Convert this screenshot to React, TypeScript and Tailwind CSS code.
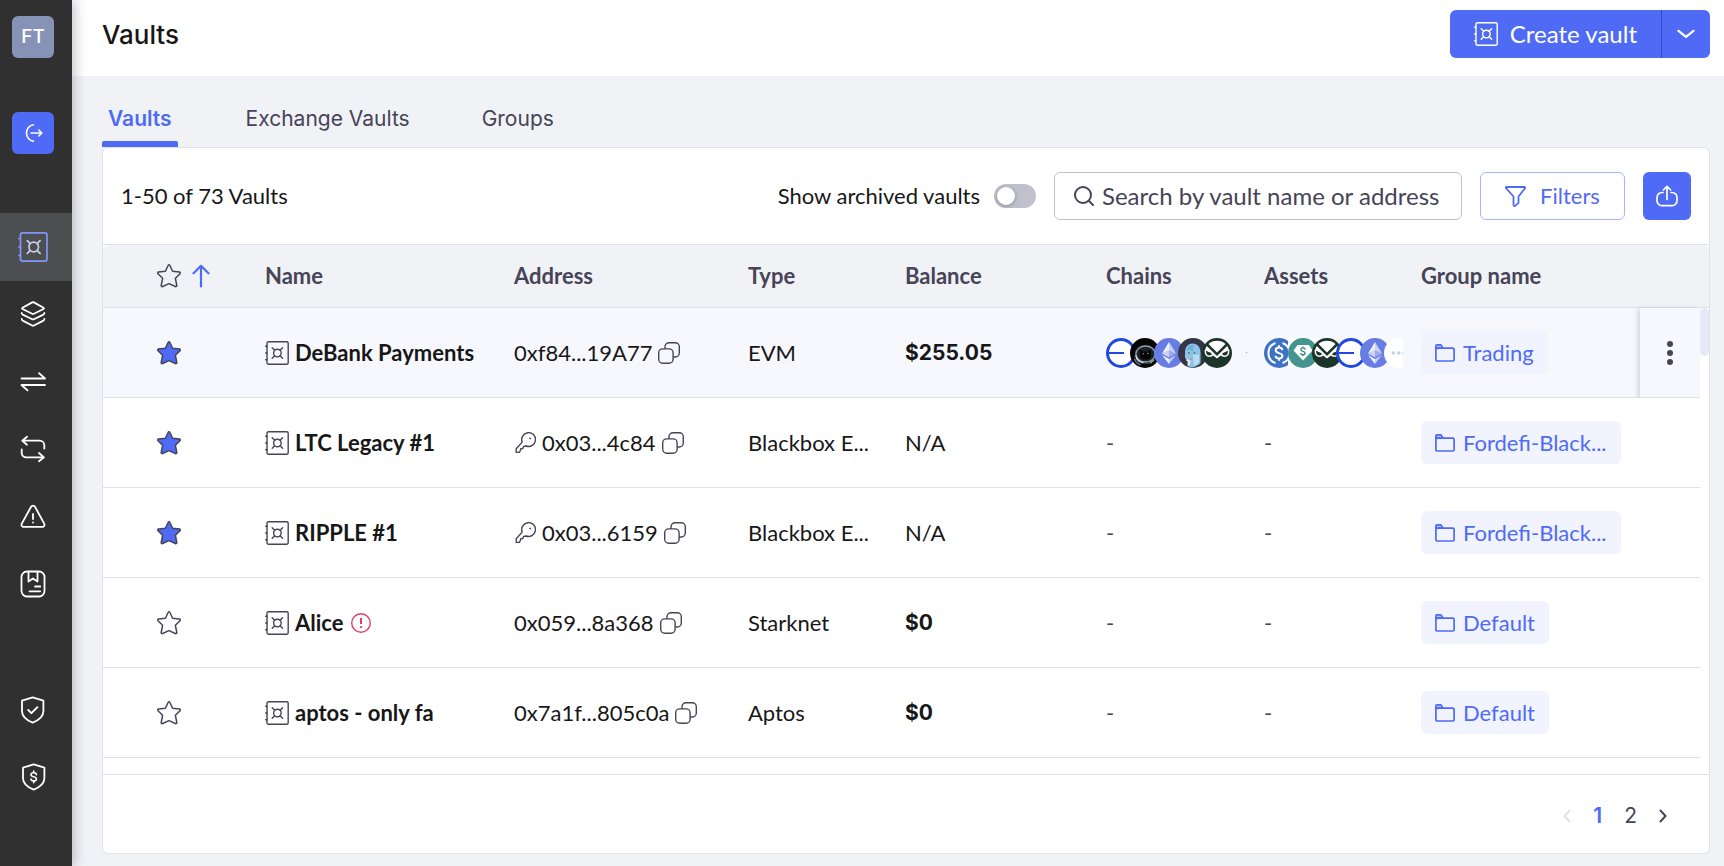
import type { ReactNode } from "react";

type IconProps = { className?: string };

function VaultIcon({ className = "size-6" }: IconProps) {
  return (
    <svg viewBox="0 0 24 24" fill="none" stroke="currentColor" strokeWidth="1.4" strokeLinecap="round" className={className} aria-hidden="true">
      <rect x="2" y="0.8" width="21.2" height="22.4" rx="1.4" />
      <path d="M0.7 5.2H2M0.7 12H2M0.7 18.8H2" />
      <circle cx="12.4" cy="12" r="3.8" />
      <path d="M9.7 9.3 7.2 6.8M15.1 9.3l2.5-2.5M9.7 14.7l-2.5 2.5M15.1 14.7l2.5 2.5" />
    </svg>
  );
}

function StarIcon({ filled = false }: { filled?: boolean }) {
  return (
    <svg viewBox="0 0 24 24" fill={filled ? "#4f6bf6" : "none"} stroke="#464457" strokeWidth="1.5" strokeLinejoin="round" className="size-6" aria-hidden="true">
      <path d="M11.2 1.3c.3-.7 1.3-.7 1.6 0l2.8 6 6.9.8c.8.1 1.1 1 .5 1.6l-4.6 4.6 1.4 7.2c.1.8-.7 1.4-1.4 1L12 19.6l-6.4 2.9c-.7.4-1.5-.2-1.4-1l1.4-7.200L1 9.700c-.6-.6-.3-1.500.5-1.600l6.900-.8z" />
    </svg>
  );
}

function ArrowUpIcon() {
  return (
    <svg viewBox="0 0 18 24" fill="none" stroke="#4f6bf6" strokeWidth="2.2" strokeLinecap="round" strokeLinejoin="round" className="h-6 w-[18px]" aria-hidden="true">
      <path d="M9 22.5V1.8M1.5 9.3 9 1.8l7.5 7.5" />
    </svg>
  );
}

function CopyIcon() {
  return (
    <svg viewBox="0 0 22 22" fill="none" stroke="#464457" strokeWidth="1.4" className="size-[22px]" aria-hidden="true">
      <rect x="0.7" y="6.9" width="14.4" height="14.4" rx="4" />
      <path d="M7 6.900V4.700a4 4 0 0 1 4-4h6.300a4 4 0 0 1 4 4V11a4 4 0 0 1-4 4h-2.200" />
    </svg>
  );
}

function KeyIcon() {
  return (
    <svg viewBox="0 0 22 22" fill="none" stroke="#464457" strokeWidth="1.4" strokeLinejoin="round" className="size-[22px]" aria-hidden="true">
      <path d="M8.200 10.100A6.900 6.900 0 1 1 12.200 14L9.600 14.400 8.800 16.600 6.800 16.800 6.200 18.800 5.300 20.400H2.200V16.800z" />
      <path d="M15.700 6h.9v.9h-.9z" fill="#464457" strokeWidth="0.8" />
    </svg>
  );
}

function FolderIcon() {
  return (
    <svg viewBox="0 0 20 18" fill="none" stroke="#4f6bf6" strokeWidth="1.7" strokeLinejoin="round" className="h-[18px] w-5" aria-hidden="true">
      <path d="M.9 4.500V1.900c0-.6.4-1 1-1H6l1.900 3z" fill="#b3c0fb" />
      <path d="M.9 4.200h16.900c.8 0 1.300.5 1.300 1.200v10.400c0 .7-.5 1.200-1.200 1.200H2.100c-.7 0-1.200-.5-1.200-1.200z" />
    </svg>
  );
}

function WarningCircleIcon() {
  return (
    <svg viewBox="0 0 20 20" fill="none" stroke="#df3f6b" className="size-5" role="img" aria-label="Needs attention">
      <circle cx="10" cy="10" r="9.3" strokeWidth="1.400" />
      <path d="M10 5v6M10 13.300v1.700" strokeWidth="2" />
    </svg>
  );
}

function FilterIcon() {
  return (
    <svg viewBox="0 0 21 21" fill="none" stroke="#4f6bf6" strokeWidth="1.8" strokeLinejoin="round" className="size-[21px]" aria-hidden="true">
      <path d="M1.600 1h17.800c.6 0 .9.700.6 1.200l-6.500 8.300v6.400l-3.300 3c-.6.500-1.700.1-1.700-.8v-8.600L1 2.200C.7 1.700 1 1 1.600 1z" />
    </svg>
  );
}

function ShareIcon() {
  return (
    <svg viewBox="0 0 22 22" fill="none" stroke="white" strokeWidth="1.7" strokeLinecap="round" strokeLinejoin="round" className="size-[22px]" aria-hidden="true">
      <path d="M11 14.500V1.400M7.400 5 11 1.400 14.600 5" />
      <path d="M7 7.500H6a5 5 0 0 0-5 5v3.200a5 5 0 0 0 5 5h10a5 5 0 0 0 5-5v-3.200a5 5 0 0 0-5-5h-1" />
    </svg>
  );
}

function SearchIcon() {
  return (
    <svg viewBox="0 0 20 20" fill="none" stroke="#464457" strokeWidth="2" strokeLinecap="round" className="size-5 shrink-0" aria-hidden="true">
      <circle cx="9" cy="9" r="8" />
      <path d="m14.800 14.800 4.200 4.200" />
    </svg>
  );
}

function NavSvg({ children }: { children: ReactNode }) {
  return (
    <svg viewBox="0 0 28 28" fill="none" stroke="white" strokeWidth="1.8" strokeLinecap="round" strokeLinejoin="round" className="size-7" aria-hidden="true">
      {children}
    </svg>
  );
}

const mainNav = [
  {
    label: "Assets",
    icon: (
      <NavSvg>
        <path d="M3.500 7.700 13.200 2.400a2 2 0 0 1 1.700 0l9.600 5.300c.5.400.5 1 0 1.300l-9.600 4.800a2 2 0 0 1-1.700 0L3.500 9c-.5-.3-.5-.900 0-1.300z" />
        <path d="M2.700 13c0 .9.500 1.300 1 1.600l9.500 4.600c.5.300 1.100.3 1.700 0l9.500-4.600c.5-.3 1-.7 1-1.600" />
        <path d="M2.700 19c0 .9.500 1.300 1 1.600l9.500 4.900c.5.300 1.100.3 1.700 0l9.500-4.900c.5-.3 1-.7 1-1.600" />
      </NavSvg>
    ),
  },
  {
    label: "Transactions",
    icon: (
      <NavSvg>
        <path d="M2.500 10.500h23.500l-6-5.300M26 17H2.500l6 5.300" />
      </NavSvg>
    ),
  },
  {
    label: "Swaps",
    icon: (
      <NavSvg>
        <path d="M8 1.700 3.300 5.700 8 9.700M3.300 5.700h17.500a4.500 4.500 0 0 1 4.500 4.500V13.500" />
        <path d="m20 18 4.900 4.400L20 26.300M24.900 22.400H7.200A4.500 4.500 0 0 1 2.700 17.900V14.500" />
      </NavSvg>
    ),
  },
  {
    label: "Alerts",
    icon: (
      <NavSvg>
        <path d="M12.100 3.700a2.300 2.300 0 0 1 3.900 0l9.200 16.900c.8 1.500-.1 3.300-1.800 3.300H4.600c-1.700 0-2.600-1.800-1.800-3.300z" />
        <path d="M14 11v5M14 19.300v.2" />
      </NavSvg>
    ),
  },
  {
    label: "Address book",
    icon: (
      <NavSvg>
        <rect x="2.500" y="1.500" width="23" height="25" rx="5.500" />
        <path d="M9.500 1.800V11.500l4.500-3 4.500 3V1.800M16 16.500h5.200M10.500 21.300h10.700" />
      </NavSvg>
    ),
  },
];

const bottomNav = [
  {
    label: "Policies",
    icon: (
      <NavSvg>
        <path d="M13.700 1.300 3 4.700v10.500c0 5.500 5.700 9.400 10.700 11.400 4.900-2 10.700-5.900 10.700-11.400V4.700z" />
        <path d="m9.200 14 3.200 3.200 6-6" strokeWidth="1.9" />
      </NavSvg>
    ),
  },
  {
    label: "Spending limits",
    icon: (
      <NavSvg>
        <path d="M14.700 1.300 4 4.700v10.500c0 5.500 5.700 9.400 10.700 11.400 4.900-2 10.700-5.900 10.700-11.400V4.700z" />
        <path d="M17.400 11.700c0-1.200-1.200-1.900-2.700-1.900s-2.700.7-2.700 2c0 2.700 5.400 1.400 5.400 4.100 0 1.300-1.200 2-2.700 2s-2.700-.7-2.700-1.900M14.700 8v1.500M14.700 18.300v1.400" strokeWidth="1.6" />
      </NavSvg>
    ),
  },
];

/* Token and network badges */

function Coin({ children, className = "" }: { children: ReactNode; className?: string }) {
  return (
    <svg viewBox="0 0 30 30" className={`size-[30px] shrink-0 ${className}`} aria-hidden="true">
      {children}
    </svg>
  );
}

const BaseCoin = () => (
  <Coin>
    <circle cx="15" cy="15" r="15" fill="#1f49de" />
    <circle cx="15" cy="15" r="12" fill="white" />
    <path d="M2 15h16" stroke="#1f49de" strokeWidth="2" />
  </Coin>
);

const AstronautCoin = () => (
  <Coin>
    <circle cx="15" cy="15" r="15" fill="#050506" />
    <path d="M5 21a12 10 0 0 1 20-10l1 9-5 6H9z" fill="#25303a" />
    <ellipse cx="15.500" cy="16" rx="9.600" ry="8" fill="#1c2429" stroke="#8fa3ab" strokeWidth="1.300" />
    <path d="m10 11.500 3 2h5l3-2.500v8l-3 2.500h-5l-3-2z" fill="#030303" />
    <path d="M12.500 15.800h1.300M17.200 15.300h1.300" stroke="#c8d2d6" strokeWidth="0.9" />
    <path d="M6 17.500c.5 4 3.500 6.500 7.500 7" stroke="#d3dee2" strokeWidth="1.500" fill="none" />
    <path d="M4.500 21c1 3 3 5 6 6" stroke="#77628c" strokeWidth="1.500" fill="none" />
    <path d="M20 25l4-3" stroke="#94a4ac" strokeWidth="1.500" />
  </Coin>
);

const EthCoin = () => (
  <Coin>
    <circle cx="15" cy="15" r="15" fill="#687de3" />
    <path d="M15 4v8.200l-7 3.200z" fill="#fff" fillOpacity="0.9" />
    <path d="M15 4l7 11.400-7-3.200z" fill="#fff" fillOpacity="0.65" />
    <path d="M15 12.200v7.300l-7-4.100z" fill="#fff" fillOpacity="0.65" />
    <path d="M15 12.200l7 3.200-7 4.100z" fill="#fff" fillOpacity="0.35" />
    <path d="M8 17l7 4.100V26z" fill="#fff" fillOpacity="0.9" />
    <path d="M22 17l-7 4.100V26z" fill="#fff" fillOpacity="0.6" />
  </Coin>
);

const GhostCoin = () => (
  <Coin>
    <circle cx="15" cy="15" r="15" fill="#343647" />
    <path d="M7 15c0-6 3-9.500 7.500-9.500 5 0 8 3.500 8 9.500v10c-2 2-5 4-8 4.500l-5-1.500V22l-2.500-2z" fill="#8cc5e6" />
    <path d="M8.500 12c1-4.500 5-6 8-4.500-2 2-2 4-1 6l-3-1z" fill="#6fb1da" />
    <path d="M15 16l6 1v8l-5 3z" fill="#b6dcf1" />
    <circle cx="11" cy="15" r="0.8" fill="#2c4358" />
    <circle cx="16.500" cy="15" r="0.8" fill="#2c4358" />
    <path d="M8.500 21.500l3 2-1 4" stroke="#f1e9f0" strokeWidth="2" fill="none" />
    <circle cx="13" cy="21" r="1.200" fill="#d78ba8" />
  </Coin>
);

const OwlCoin = () => (
  <Coin>
    <circle cx="15" cy="15" r="15" fill="#1c352b" />
    <path d="M6.500 6A12.800 12.800 0 0 1 23.500 6L15 14.500z" fill="white" />
    <path d="M4.800 8 15 18 25.200 8A12.800 12.800 0 0 1 27 12L21.500 15.500 15 20.500 8.500 15.500 3 12A12.800 12.800 0 0 1 4.800 8z" fill="white" />
    <path d="M5 13.500c0 2.200 1 3.200 2.500 3.200s2.200-.7 2-1.700zM25 13.500c0 2.200-1 3.200-2.500 3.200s-2.200-.7-2-1.700z" fill="#1c352b" />
    <path d="M3.300 12c-.3 4 1.200 6.200 4.200 6.200 1.500 0 2.700-.7 3.500-1.700M26.700 12c.3 4-1.200 6.200-4.200 6.200-1.500 0-2.700-.7-3.500-1.700" stroke="white" strokeWidth="1.400" fill="none" />
  </Coin>
);

function DollarMark({ color }: { color: string }) {
  return (
    <path
      d="M18.300 12.200c0-1.700-1.400-2.700-3.300-2.700s-3.300 1-3.300 2.700c0 3.900 6.700 1.900 6.700 5.600 0 1.800-1.500 2.800-3.400 2.800s-3.400-1-3.400-2.800M15 7.300v2M15 20.800v2"
      stroke={color}
      strokeWidth="2"
      fill="none"
    />
  );
}

const UsdcCoin = () => (
  <Coin>
    <circle cx="15" cy="15" r="15" fill="#3d73c4" />
    <path d="M11.500 5a10.600 10.600 0 0 0 0 20M18.500 5a10.600 10.600 0 0 1 0 20" stroke="white" strokeWidth="2" fill="none" />
    <DollarMark color="white" />
  </Coin>
);

const TealCoin = () => (
  <Coin className="bg-white">
    <circle cx="15" cy="15" r="15" fill="#43938e" />
    <path d="M9.500 7h11.500l3.500 5.500L15 22.500 5.500 12.500z" fill="white" />
    <g transform="translate(5.500 3.800) scale(.63)">
      <DollarMark color="#347f7a" />
    </g>
  </Coin>
);

const MoreCoin = () => (
  <Coin>
    <circle cx="15" cy="15" r="15" fill="white" />
    <path d="M15 0h15v30H15z" fill="white" />
    <circle cx="9.500" cy="15" r="1.800" fill="#c6d0e8" />
    <circle cx="14.800" cy="15" r="1.800" fill="#c6d0e8" />
    <circle cx="20" cy="15" r="1.800" fill="#c6d0e8" />
  </Coin>
);

type Vault = {
  name: string;
  starred: boolean;
  address: string;
  hasKey?: boolean;
  warning?: boolean;
  type: string;
  balance: string;
  group: string;
  active?: boolean;
};

const vaults: Vault[] = [
  { name: "DeBank Payments", starred: true, address: "0xf84...19A77", type: "EVM", balance: "$255.05", group: "Trading", active: true },
  { name: "LTC Legacy #1", starred: true, address: "0x03...4c84", hasKey: true, type: "Blackbox E...", balance: "N/A", group: "Fordefi-Black..." },
  { name: "RIPPLE #1", starred: true, address: "0x03...6159", hasKey: true, type: "Blackbox E...", balance: "N/A", group: "Fordefi-Black..." },
  { name: "Alice", starred: false, address: "0x059...8a368", warning: true, type: "Starknet", balance: "$0", group: "Default" },
  { name: "aptos - only fa", starred: false, address: "0x7a1f...805c0a", type: "Aptos", balance: "$0", group: "Default" },
];

function VaultRow({ vault }: { vault: Vault }) {
  const cell = `h-[90px] border-b border-[#dfe1e6] p-0 ${vault.active ? "bg-[#f7f8fd]" : "bg-white"}`;
  return (
    <tr>
      <td className={`${cell} pl-[54px]`}>
        <button type="button" className="block" aria-label={vault.starred ? `Unstar ${vault.name}` : `Star ${vault.name}`}>
          <StarIcon filled={vault.starred} />
        </button>
      </td>
      <td className={cell}>
        <div className="flex items-center">
          <VaultIcon className="mr-1.5 size-6 text-[#464457]" />
          <span className="font-bold whitespace-nowrap">{vault.name}</span>
          {vault.warning && <span className="ml-2"><WarningCircleIcon /></span>}
        </div>
      </td>
      <td className={cell}>
        <div className="flex items-center gap-1.5">
          {vault.hasKey && <KeyIcon />}
          <span>{vault.address}</span>
          <button type="button" aria-label={`Copy address of ${vault.name}`}>
            <CopyIcon />
          </button>
        </div>
      </td>
      <td className={`${cell} whitespace-nowrap`}>{vault.type}</td>
      <td className={cell}>
        {vault.balance === "N/A" ? vault.balance : <span className="font-[Inter,sans-serif] text-[21px] font-bold">{vault.balance}</span>}
      </td>
      <td className={cell}>
        {vault.active ? (
          <div className="flex items-center -space-x-1.5">
            <BaseCoin />
            <AstronautCoin />
            <EthCoin />
            <GhostCoin />
            <OwlCoin />
            <span className="pl-5">
              <span className="block size-px bg-[#8a93a8]" />
            </span>
          </div>
        ) : (
          <span className="text-[#464457]">-</span>
        )}
      </td>
      <td className={cell}>
        {vault.active ? (
          <div className="mr-[18px] flex items-center -space-x-1.5 overflow-hidden">
            <UsdcCoin />
            <TealCoin />
            <OwlCoin />
            <BaseCoin />
            <EthCoin />
            <MoreCoin />
          </div>
        ) : (
          <span className="text-[#464457]">-</span>
        )}
      </td>
      <td className={cell}>
        <a href="#group" className="inline-flex h-[43px] items-center gap-2 rounded-md bg-[#f1f3fe] px-3.5 align-middle whitespace-nowrap text-[#4f6bf6]">
          <FolderIcon />
          {vault.group}
        </a>
      </td>
      <td className={`${cell} ${vault.active ? "shadow-[-3px_0_5px_-1px_rgba(40,40,60,0.18)]" : ""}`}>
        {vault.active && (
          <button type="button" aria-label={`Actions for ${vault.name}`} className="flex w-full justify-center">
            <svg viewBox="0 0 6 24" fill="#464457" className="h-6 w-1.5" aria-hidden="true">
              <circle cx="3" cy="3" r="3" />
              <circle cx="3" cy="12" r="3" />
              <circle cx="3" cy="21" r="3" />
            </svg>
          </button>
        )}
      </td>
      <td className="p-0 align-top">{vault.active && <div className="h-12 w-[9px] rounded-full bg-[#e7e9f6]" />}</td>
    </tr>
  );
}

export default function App() {
  const th = "h-[63px] border-b border-[#dfe1e6] bg-[#f1f2f6] p-0 text-left font-bold text-[#464457]";
  return (
    <div className="flex min-h-screen bg-[#f1f2f6] font-[Lato,sans-serif] text-[22px] leading-7 text-[#171717]">
      <aside className="z-10 flex w-18 shrink-0 flex-col bg-[#303030] shadow-[2px_0_12px_rgba(30,30,50,0.28)]">
        <div className="flex flex-col items-start gap-[54px] pt-4 pl-3">
          <button type="button" className="size-[42px] rounded-md bg-[#8792b7] font-[Inter,sans-serif] text-[19px] font-medium text-white">
            FT
          </button>
          <button type="button" aria-label="Switch workspace" className="flex size-[42px] items-center justify-center rounded-md bg-[#4f6bf6]">
            <svg viewBox="0 0 20 20" fill="none" stroke="white" strokeWidth="1.6" strokeLinecap="round" strokeLinejoin="round" className="size-5" aria-hidden="true">
              <path d="M10.500 1.800a8.300 8.300 0 0 0 0 16.400M8 10h10.800M15.800 7l3 3-3 3" />
            </svg>
          </button>
        </div>
        <nav aria-label="Main" className="mt-[59px] flex grow flex-col">
          <div className="grid h-[405px] grid-rows-6">
            <a href="#vaults" aria-label="Vaults" aria-current="page" className="flex items-center justify-center bg-[#4d4e50] pr-1.5">
              <svg viewBox="0 0 30 30" fill="none" strokeWidth="1.7" strokeLinecap="round" className="size-[30px]" aria-hidden="true">
                <g stroke="#7f97fb">
                  <rect x="2.500" y="0.900" width="26.500" height="28.200" rx="2" />
                  <path d="M.9 6.500h1.500M.9 15h1.500M.9 23.500h1.500" />
                </g>
                <g stroke="#c3d0f2">
                  <circle cx="15.700" cy="15" r="4.800" />
                  <path d="m12.300 11.600-3-3M19.100 11.600l3-3M12.300 18.400l-3 3M19.100 18.400l3 3" />
                </g>
              </svg>
            </a>
            {mainNav.map((item) => (
              <a key={item.label} href="#" aria-label={item.label} className="flex items-center justify-center pr-1.5">
                {item.icon}
              </a>
            ))}
          </div>
          <div className="mt-[58px] grid h-[135px] grid-rows-2">
            {bottomNav.map((item) => (
              <a key={item.label} href="#" aria-label={item.label} className="flex items-center justify-center pr-1.5">
                {item.icon}
              </a>
            ))}
          </div>
        </nav>
      </aside>

      <div className="flex min-w-0 grow flex-col">
        <header className="flex h-19 items-start justify-between bg-white pr-3.5 pl-[30px]">
          <h1 className="pt-[19px] font-[Inter,sans-serif] text-[26px] leading-8 font-medium">Vaults</h1>
          <div className="mt-2.5 flex h-12 overflow-hidden rounded-md bg-[#4f6bf6] text-white">
            <button type="button" className="flex items-center gap-3 pr-6 pl-6 text-2xl">
              <VaultIcon />
              Create vault
            </button>
            <button type="button" aria-label="More create options" className="flex w-[49px] items-center justify-center border-l border-[#3248c4]">
              <svg viewBox="0 0 18 10" fill="none" stroke="white" strokeWidth="2.2" strokeLinecap="round" strokeLinejoin="round" className="h-2.5 w-[18px]" aria-hidden="true">
                <path d="m1.500 1.800 7.500 6 7.500-6" />
              </svg>
            </button>
          </div>
        </header>

        <main className="flex grow flex-col pr-3.5 pb-3 pl-[30px]">
          <div role="tablist" className="flex h-[71px] items-end gap-[68px] font-[Inter,sans-serif] text-[21px] text-[#464457]">
            <button type="button" role="tab" aria-selected="true" className="flex h-14 flex-col justify-between pt-3.5 font-semibold text-[#4f6bf6]">
              <span className="px-1.5">Vaults</span>
              <span className="h-1.5 w-full rounded-t-xs bg-[#4f6bf6]" />
            </button>
            <button type="button" role="tab" aria-selected="false" className="h-14 pt-3.5 pb-3.5">
              Exchange Vaults
            </button>
            <button type="button" role="tab" aria-selected="false" className="ml-1 h-14 pt-3.5 pb-3.5">
              Groups
            </button>
          </div>

          <section className="flex grow flex-col overflow-hidden rounded-md border border-[#dfe1e6] bg-white">
            <div className="flex h-24 items-center justify-between px-[18px]">
              <p>1-50 of 73 Vaults</p>
              <div className="flex items-center gap-[18px]">
                <label className="flex items-center gap-3.5">
                  Show archived vaults
                  <input
                    type="checkbox"
                    role="switch"
                    className="h-6 w-[42px] appearance-none rounded-full bg-[#c1c1cd] p-[3px] before:block before:size-[18px] before:rounded-full before:bg-white before:shadow-[0_1px_4px_rgba(0,0,0,0.3)] checked:bg-[#4f6bf6] checked:before:translate-x-[18px]"
                  />
                </label>
                <label className="flex h-12 w-[408px] items-center gap-2 rounded-md border border-[#c1c1cd] pl-[19px]">
                  <SearchIcon />
                  <input
                    type="search"
                    aria-label="Search vaults"
                    placeholder="Search by vault name or address"
                    className="min-w-0 grow bg-transparent text-2xl outline-none placeholder:text-[#464457]"
                  />
                </label>
                <button type="button" className="flex h-12 w-[145px] items-center justify-center gap-3.5 rounded-md border border-[#a7b5fa] text-[#4f6bf6]">
                  <FilterIcon />
                  Filters
                </button>
                <button type="button" aria-label="Export" className="flex size-12 items-center justify-center rounded-md bg-[#4f6bf6]">
                  <ShareIcon />
                </button>
              </div>
            </div>

            <div className="grow overflow-hidden border-t border-[#dfe1e6]">
              <table className="w-full table-fixed border-separate border-spacing-0">
                <colgroup>
                  <col className="w-[162px]" />
                  <col className="w-[249px]" />
                  <col className="w-[234px]" />
                  <col className="w-[157px]" />
                  <col className="w-[201px]" />
                  <col className="w-[158px]" />
                  <col className="w-[157px]" />
                  <col />
                  <col className="w-[60px]" />
                  <col className="w-[9px]" />
                </colgroup>
                <thead>
                  <tr>
                    <th className={`${th} rounded-tl-md pl-[54px]`}>
                      <button type="button" aria-label="Sort by starred" className="flex items-center gap-[11px]">
                        <StarIcon />
                        <ArrowUpIcon />
                      </button>
                    </th>
                    <th className={th}>Name</th>
                    <th className={th}>Address</th>
                    <th className={th}>Type</th>
                    <th className={th}>Balance</th>
                    <th className={th}>Chains</th>
                    <th className={th}>Assets</th>
                    <th className={th}>Group name</th>
                    <td className={th} />
                    <td className={`${th} rounded-tr-md`} />
                  </tr>
                </thead>
                <tbody>
                  {vaults.map((vault) => (
                    <VaultRow key={vault.name} vault={vault} />
                  ))}
                </tbody>
              </table>
            </div>

            <nav aria-label="Pagination" className="flex h-[79px] items-center justify-end gap-[22px] border-t border-[#dfe1e6] pt-1 pr-[42px] font-[Inter,sans-serif] text-[21px] text-[#464457]">
              <button type="button" disabled aria-label="Previous page">
                <svg viewBox="0 0 8 14" fill="none" stroke="#d9d9de" strokeWidth="1.6" className="h-3.5 w-2" aria-hidden="true">
                  <path d="M7 1 1.500 7 7 13" />
                </svg>
              </button>
              <button type="button" aria-current="page" className="font-semibold text-[#4f6bf6]">1</button>
              <button type="button">2</button>
              <button type="button" aria-label="Next page">
                <svg viewBox="0 0 8 14" fill="none" stroke="#464457" strokeWidth="2" className="h-3.5 w-2" aria-hidden="true">
                  <path d="M1 1 6.500 7 1 13" />
                </svg>
              </button>
            </nav>
          </section>
        </main>
      </div>
    </div>
  );
}
